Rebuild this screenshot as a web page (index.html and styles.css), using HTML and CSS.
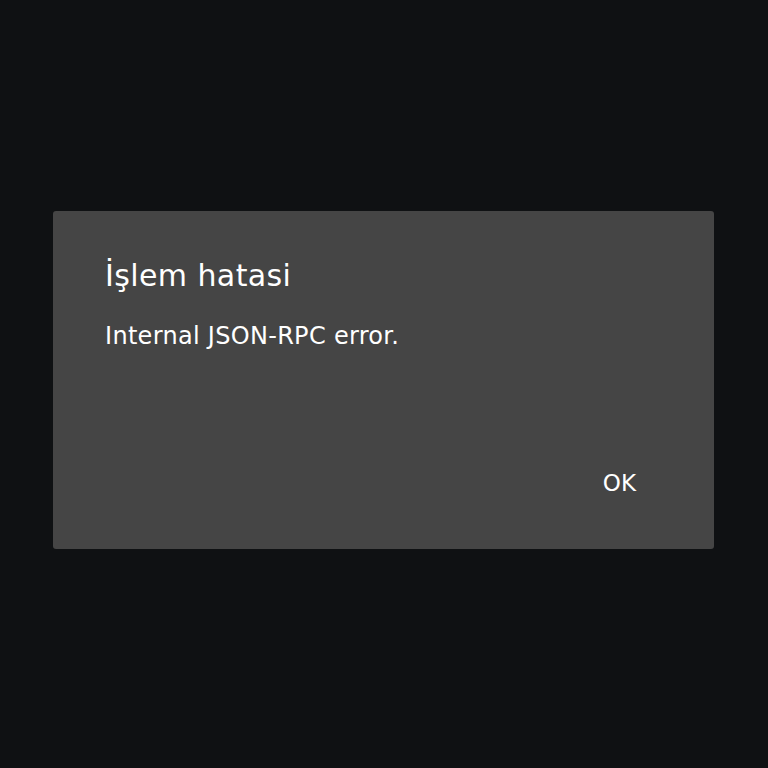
FILE: index.html
```html
<!DOCTYPE html>
<html lang="tr">
<head>
<meta charset="utf-8">
<link rel="stylesheet" href="styles.css">
</head>
<body>
<div class="screen">
  <div class="dialog">
    <h1 class="title">İşlem hatasi</h1>
    <p class="message">Internal JSON-RPC error.</p>
    <div class="actions">
      <button class="ok">OK</button>
    </div>
  </div>
</div>
</body>
</html>
```
FILE: styles.css
```css
html, body {
  margin: 0;
  padding: 0;
  background: #0f1113;
}
.screen {
  width: 768px;
  height: 768px;
  padding: 211px 54px 0 53px;
  box-sizing: border-box;
}
.dialog {
  height: 338px;
  background: #454545;
  border-radius: 3px;
  box-sizing: border-box;
  padding: 45px 52px 0 52px;
  display: flex;
  flex-direction: column;
  font-family: "DejaVu Sans", "Open Sans", sans-serif;
  color: #ffffff;
}
.title {
  margin: 0;
  font-size: 30px;
  font-weight: 400;
  line-height: 40px;
  letter-spacing: 0.4px;
}
.message {
  margin: 25px 0 0 0;
  font-size: 24px;
  line-height: 30px;
  letter-spacing: 0.3px;
}
.actions {
  display: flex;
  justify-content: flex-end;
  margin-top: 117px;
}
.ok {
  background: none;
  border: none;
  color: #ffffff;
  font-family: "DejaVu Sans", "Open Sans", sans-serif;
  font-size: 23px;
  padding: 0;
  margin-right: 26px;
  line-height: 30px;
}
```
